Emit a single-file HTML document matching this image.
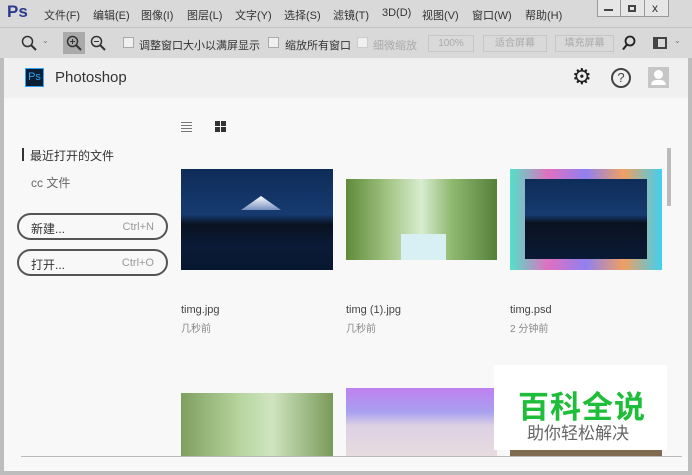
<!DOCTYPE html><html><head><meta charset="utf-8"><style>
*{margin:0;padding:0;box-sizing:border-box}
body{width:692px;height:475px;overflow:hidden;background:#bdbdbd;font-family:"Liberation Sans","Noto Sans CJK SC",sans-serif;position:relative}
.a{position:absolute}
.menu{top:0;left:0;width:692px;height:27px;background:#d9d9d9}
.menu span{position:absolute;top:7px;font-size:11px;color:#333}
.tb{top:27px;left:0;width:692px;height:31px;background:#d9d9d9;border-top:1px solid #c4c4c4}
.tb span{position:absolute;font-size:11px;color:#333;top:9px}
.cb{position:absolute;top:9px;width:11px;height:11px;border:1px solid #aaa;background:#f0f0f0}
.btn{position:absolute;top:7px;height:17px;border:1px solid #c6c6c6;font-size:10px;color:#aaa;text-align:center;line-height:15px}
.hdr{top:58px;left:4px;width:684px;height:40px;background:#f0f0f0}
.main{top:98px;left:4px;width:684px;height:373px;background:#f8f8f8}
.pill{position:absolute;left:13px;width:151px;height:27px;border:2px solid #555;border-radius:14px;font-size:12px;color:#333}
.pill b{font-weight:normal;position:absolute;left:12px;top:5px}
.pill i{font-style:normal;position:absolute;right:12px;top:6px;font-size:11px;color:#999}
.lbl{font-size:11px;color:#444}
.sub{font-size:10px;color:#888}
svg.m{position:absolute}
</style></head><body>
<div class="a menu">
<span style="left:7px;top:2px;font-size:17px;font-weight:bold;color:#2d3a8c">Ps</span>
<span style="left:44px">文件(F)</span><span style="left:93px">编辑(E)</span><span style="left:141px">图像(I)</span><span style="left:187px">图层(L)</span><span style="left:235px">文字(Y)</span><span style="left:284px">选择(S)</span><span style="left:333px">滤镜(T)</span><span style="left:382px">3D(D)</span><span style="left:422px">视图(V)</span><span style="left:472px">窗口(W)</span><span style="left:525px">帮助(H)</span>
<div class="a" style="left:597px;top:0;width:72px;height:17px;border:1px solid #999;border-top:none;background:#e6e6e6"></div>
<div class="a" style="left:620px;top:0;width:1px;height:17px;background:#999"></div>
<div class="a" style="left:644px;top:0;width:1px;height:17px;background:#999"></div>
<div class="a" style="left:604px;top:9px;width:9px;height:2px;background:#444"></div>
<div class="a" style="left:628px;top:5px;width:8px;height:7px;border:2px solid #444"></div>
<span style="left:652px;top:1px;font-size:12px">x</span>
</div>
<div class="a tb">
<svg class="m" style="left:21px;top:7px" width="16" height="16" viewBox="0 0 16 16"><circle cx="6.5" cy="6.5" r="5" fill="none" stroke="#333" stroke-width="1.5"/><path d="M10 10l5 5" stroke="#333" stroke-width="2"/></svg>
<span style="left:42px;top:8px;font-size:8px;color:#777">&#8964;</span>
<div class="a" style="left:63px;top:4px;width:22px;height:22px;background:#aaa"></div>
<svg class="m" style="left:66px;top:7px" width="16" height="16" viewBox="0 0 16 16"><circle cx="6.5" cy="6.5" r="5" fill="none" stroke="#333" stroke-width="1.5"/><path d="M10 10l5 5" stroke="#333" stroke-width="2"/><path d="M4 6.5h5M6.5 4v5" stroke="#333"/></svg>
<svg class="m" style="left:90px;top:7px" width="16" height="16" viewBox="0 0 16 16"><circle cx="6.5" cy="6.5" r="5" fill="none" stroke="#333" stroke-width="1.5"/><path d="M10 10l5 5" stroke="#333" stroke-width="2"/><path d="M4 6.5h5" stroke="#333"/></svg>
<div class="cb" style="left:123px"></div><span style="left:139px">调整窗口大小以满屏显示</span>
<div class="cb" style="left:268px"></div><span style="left:285px">缩放所有窗口</span>
<div class="cb" style="left:357px;border-color:#ccc"></div><span style="left:373px;color:#aaa">细微缩放</span>
<div class="btn" style="left:428px;width:46px">100%</div>
<div class="btn" style="left:483px;width:64px">适合屏幕</div>
<div class="btn" style="left:555px;width:59px">填充屏幕</div>
<svg class="m" style="left:622px;top:7px" width="14" height="16" viewBox="0 0 14 16"><circle cx="8" cy="6" r="4.5" fill="none" stroke="#222" stroke-width="1.8"/><path d="M5 9.5l-4 5" stroke="#222" stroke-width="2"/></svg>
<div class="a" style="left:653px;top:9px;width:14px;height:12px;border:2px solid #444;border-left-width:5px"></div>
<span style="left:674px;top:8px;font-size:8px;color:#777">&#8964;</span>
</div>
<div class="a hdr">
<div class="a" style="left:21px;top:10px;width:19px;height:19px;background:#0b1e33;border:1px solid #2fa3f7;color:#2fa3f7;font-size:11px;line-height:17px;text-align:center">Ps</div>
<span class="a" style="left:51px;top:11px;font-size:15px;color:#333">Photoshop</span>
<span class="a" style="left:568px;top:6px;font-size:22px;color:#222">&#9881;</span>
<div class="a" style="left:607px;top:10px;width:20px;height:20px;border:2px solid #444;border-radius:50%;font-size:13px;text-align:center;line-height:16px;color:#444">?</div>
<div class="a" style="left:644px;top:9px;width:21px;height:21px;background:#c6c6c6"><div class="a" style="left:6px;top:3px;width:9px;height:9px;border-radius:50%;background:#fff"></div><div class="a" style="left:3px;top:13px;width:15px;height:5px;background:#fff;border-radius:5px 5px 0 0"></div></div>
</div>
<div class="a main">
<div class="a" style="left:177px;top:24px;width:11px;height:1px;background:#777;box-shadow:0 3px #777,0 6px #777,0 9px #777"></div>
<div class="a" style="left:211px;top:23px;width:5px;height:5px;background:#333;box-shadow:6px 0 #333,0 6px #333,6px 6px #333"></div>
<div class="a" style="left:18px;top:50px;width:2px;height:13px;background:#333"></div>
<span class="a" style="left:26px;top:49px;font-size:12px;color:#333">最近打开的文件</span>
<span class="a" style="left:27px;top:76px;font-size:12px;color:#666">cc 文件</span>
<div class="pill" style="top:115px"><b>新建...</b><i>Ctrl+N</i></div>
<div class="pill" style="top:151px"><b>打开...</b><i>Ctrl+O</i></div>
<div class="a" style="left:177px;top:71px;width:152px;height:101px;background:linear-gradient(#0e2c58 0%,#163b70 45%,#0a1220 55%,#0a1a36 75%,#081830 100%)"><div class="a" style="left:60px;top:27px;width:40px;height:14px;background:linear-gradient(#fff,#7890c0);clip-path:polygon(50% 0,100% 100%,0 100%)"></div></div>
<div class="a" style="left:342px;top:81px;width:151px;height:81px;background:linear-gradient(90deg,#5f8a3a,#a8c98a 30%,#d8ecd0 50%,#8fb870 70%,#56803a)"><div class="a" style="left:55px;top:55px;width:45px;height:26px;background:#d8f0f4"></div></div>
<div class="a" style="left:506px;top:71px;width:152px;height:101px;background:linear-gradient(90deg,#54e0c8,#e070c0 25%,#9080f0 50%,#f0a060 75%,#40d0f0)"><div class="a" style="left:15px;top:10px;width:122px;height:80px;background:linear-gradient(#0e2c58 0%,#163b70 45%,#0a1220 55%,#0a1a36 100%)"></div></div>
<span class="a lbl" style="left:177px;top:206px">timg.jpg</span><span class="a sub" style="left:177px;top:222px">几秒前</span>
<span class="a lbl" style="left:342px;top:206px">timg (1).jpg</span><span class="a sub" style="left:342px;top:222px">几秒前</span>
<span class="a lbl" style="left:506px;top:206px">timg.psd</span><span class="a sub" style="left:506px;top:222px">2 分钟前</span>
<div class="a" style="left:177px;top:295px;width:152px;height:63px;background:linear-gradient(90deg,#7fa060,#b8d6a0 40%,#cfe4c0 60%,#7a9a58)"></div>
<div class="a" style="left:342px;top:290px;width:151px;height:68px;background:linear-gradient(#c080f0,#a8a0f0 35%,#dcd0e4 55%,#e8dce0)"></div>
<div class="a" style="left:506px;top:350px;width:152px;height:8px;background:#806a50"></div>
<div class="a" style="left:17px;top:358px;width:661px;height:1px;background:#bbb"></div>
<div class="a" style="left:663px;top:50px;width:4px;height:58px;background:#bbb"></div>
<div class="a" style="left:490px;top:267px;width:173px;height:85px;background:#fff"></div>
<span class="a" style="left:514px;top:284px;font-size:31px;font-weight:bold;color:#1fbe3a;letter-spacing:1px">百科全说</span>
<span class="a" style="left:523px;top:321px;font-size:17px;color:#666">助你轻松解决</span>
</div>
</body></html>
